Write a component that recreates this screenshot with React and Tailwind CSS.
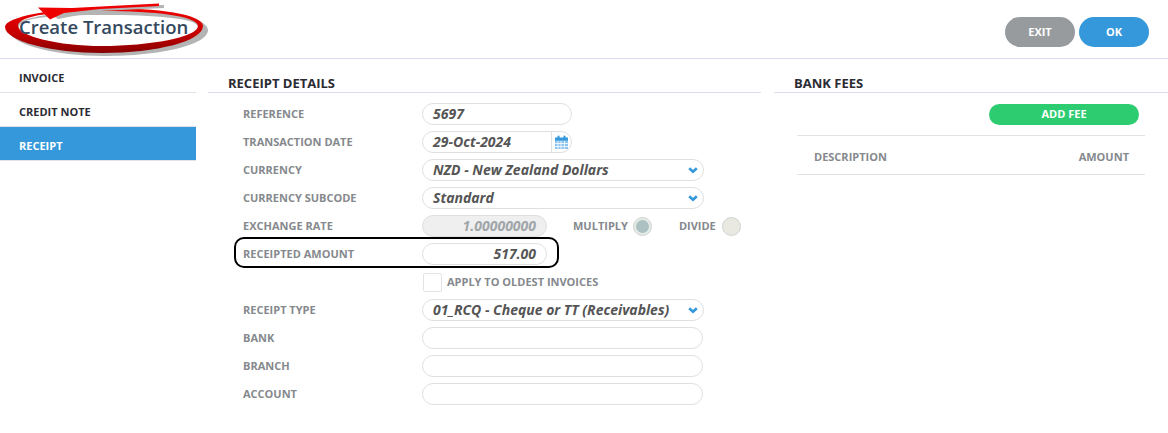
const font = { fontFamily: '"Open Sans", sans-serif' };

function Circle() {
  return (
    <svg className="absolute left-0 top-0 pointer-events-none" width="215" height="58" viewBox="0 0 215 58">
      <defs>
        <linearGradient id="ring" x1="0" y1="0" x2="0" y2="1">
          <stop offset="0" stopColor="#f00000" />
          <stop offset="0.55" stopColor="#c80000" />
          <stop offset="1" stopColor="#870000" />
        </linearGradient>
      </defs>
      <path
        fillRule="evenodd"
        fill="#b4b4b4"
        d="M9 30C9 20 55 10 110 10C162 10 208 17 208 30C208 45 160 56 104 56C55 56 9 44 9 30ZM19 27C19 38 58 49 104 49C150 49 198 38 198 27C198 18 153 15 105 15C58 15 19 17 19 27Z"
      />
      <path
        fillRule="evenodd"
        fill="url(#ring)"
        d="M5 27C5 17 52 8 105 8C157 8 203 14 203 26C203 41 157 53 102 53C52 53 5 41 5 27ZM18 26C18 36 58 46 102 46C150 46 198 37 198 26C198 16 153 11 105 11C58 11 18 15 18 26Z"
      />
      <path fill="#b4b4b4" d="M52 15L100 7L164 5L164 8L100 11L58 19Z" />
      <path fill="#ee0000" d="M38 7.500L72 8L159 3.500L159 6L100 9L64 13L50 19.500Z" />
    </svg>
  );
}

function CalendarIcon() {
  return (
    <svg width="15" height="15" viewBox="0 0 15 15">
      <rect x="1" y="3" width="13" height="11" fill="#8cc4f0" />
      <rect x="1" y="2.500" width="13" height="3" fill="#3498db" />
      <rect x="3.500" y="0.500" width="2" height="3.500" rx="1" fill="#3498db" />
      <rect x="9.500" y="0.500" width="2" height="3.500" rx="1" fill="#3498db" />
      <path d="M4 6V14M7 6V14M10.500 6V14M1 8.500H14M1 11.500H14" stroke="#ffffff" strokeWidth="0.800" fill="none" />
    </svg>
  );
}

function Chevron() {
  return (
    <svg width="10" height="7" viewBox="0 0 10 7" className="mr-[5px] shrink-0">
      <path d="M1.200 1.200L5 4.800L8.800 1.200" stroke="#3498db" strokeWidth="2.600" fill="none" />
    </svg>
  );
}

function Input({ value, w = "w-[150px]", right, disabled, children }) {
  return (
    <div
      className={`${w} h-[22px] rounded-full border border-[#e0e0e0] flex items-center overflow-hidden text-[14px] font-bold italic ${
        disabled ? "bg-[#efefef] text-[#a0a5a9]" : "bg-white text-[#555555]"
      } ${right ? "justify-end pr-[10px]" : "pl-[10px]"}`}
    >
      {value && <span className={`pb-[2px] ${children ? "flex-1" : ""}`}>{value}</span>}
      {children}
    </div>
  );
}

function Select({ value }) {
  return (
    <Input value={value} w="w-[282px]">
      <Chevron />
    </Input>
  );
}

function Row({ label, children, className = "" }) {
  return (
    <div className={`h-[28px] flex items-center ${className}`}>
      <div className="w-[179px] text-[11px] font-bold text-[#85898d]">{label}</div>
      {children}
    </div>
  );
}

function Radio({ ring, fill }) {
  return (
    <span className={`w-[19px] h-[19px] rounded-full border border-[#cfd3cf] flex items-center justify-center ${ring}`}>
      <span className={`w-[13px] h-[13px] rounded-full ${fill}`} />
    </span>
  );
}

export default function App() {
  const tabs = ["INVOICE", "CREDIT NOTE", "RECEIPT"];
  return (
    <div style={font} className="w-[1168px] h-[433px] bg-white overflow-hidden">
      <div className="relative h-[59px] border-b border-[#dcdaf0] flex items-start justify-between">
        <div className="relative z-10 pl-[19px] pt-[14px] text-[18.500px] leading-[26px] font-semibold text-[#34495e]">Create Transaction</div>
        <Circle />
        <div className="flex gap-[4px] pt-[17px] pr-[19px]">
          <button className="w-[70px] h-[30px] rounded-full bg-[#979b9e] text-white text-[11px] font-bold">EXIT</button>
          <button className="w-[70px] h-[30px] rounded-full bg-[#3498db] text-white text-[11px] font-bold">OK</button>
        </div>
      </div>

      <div className="flex">
        <div className="w-[196px]">
          {tabs.map((t) => (
            <div
              key={t}
              className={`h-[34px] pl-[19px] pt-[6px] flex items-center text-[11px] font-bold border-b border-[#e2e2ea] ${
                t === "RECEIPT" ? "bg-[#3498db] text-white" : "text-[#2b2b33]"
              }`}
            >
              {t}
            </div>
          ))}
        </div>

        <div className="w-[553px] ml-[12px]">
          <div className="h-[34px] pl-[20px] pt-[15px] border-b border-[#dcdaf0] text-[13px] leading-[18px] font-bold text-[#2b2b33]">RECEIPT DETAILS</div>
          <div className="pl-[35px] pt-[7px]">
            <Row label="REFERENCE"><Input value="5697" /></Row>
            <Row label="TRANSACTION DATE">
              <Input value="29-Oct-2024">
                <span className="w-[20px] h-full border-l border-[#e0e0e0] flex items-center justify-center shrink-0">
                  <CalendarIcon />
                </span>
              </Input>
            </Row>
            <Row label="CURRENCY"><Select value="NZD - New Zealand Dollars" /></Row>
            <Row label="CURRENCY SUBCODE"><Select value="Standard" /></Row>
            <Row label="EXCHANGE RATE">
              <Input value="1.00000000" w="w-[125px]" right disabled />
              <span className="ml-[26px] text-[11px] font-bold text-[#85898d]">MULTIPLY</span>
              <span className="ml-[5px]"><Radio ring="bg-[#e6ebe6]" fill="bg-[#adc1c2]" /></span>
              <span className="ml-[27px] text-[11px] font-bold text-[#85898d]">DIVIDE</span>
              <span className="ml-[6px]"><Radio ring="bg-[#e9e9e2]" fill="bg-[#e9e9e2]" /></span>
            </Row>
            <Row label="RECEIPTED AMOUNT" className="relative">
              <Input value="517.00" w="w-[125px]" right />
              <div className="absolute left-[-9px] top-[-3px] w-[325px] h-[31px] rounded-[10px] border-2 border-black" />
            </Row>
            <Row label="">
              <span className="ml-px w-[19px] h-[19px] rounded-[2px] border border-[#e4e4e4]" />
              <span className="ml-[5px] text-[11px] font-bold text-[#85898d]">APPLY TO OLDEST INVOICES</span>
            </Row>
            <Row label="RECEIPT TYPE"><Select value="01_RCQ - Cheque or TT (Receivables)" /></Row>
            <Row label="BANK"><Input w="w-[281px]" /></Row>
            <Row label="BRANCH"><Input w="w-[281px]" /></Row>
            <Row label="ACCOUNT"><Input w="w-[281px]" /></Row>
          </div>
        </div>

        <div className="flex-1 ml-[13px]">
          <div className="h-[34px] pl-[20px] pt-[15px] border-b border-[#dcdaf0] text-[13px] leading-[18px] font-bold text-[#2b2b33]">BANK FEES</div>
          <div className="flex justify-end pr-[29px] pt-[11px]">
            <button className="w-[150px] h-[21px] rounded-full bg-[#2ecc71] text-white text-[11px] font-bold">ADD FEE</button>
          </div>
          <div className="ml-[23px] mr-[23px] mt-[10px] h-[40px] pt-[4px] border-y border-[#e2e2e6] flex items-center justify-between pl-[17px] pr-[16px] text-[11px] font-bold text-[#85898d]">
            <span>DESCRIPTION</span>
            <span>AMOUNT</span>
          </div>
        </div>
      </div>
    </div>
  );
}
